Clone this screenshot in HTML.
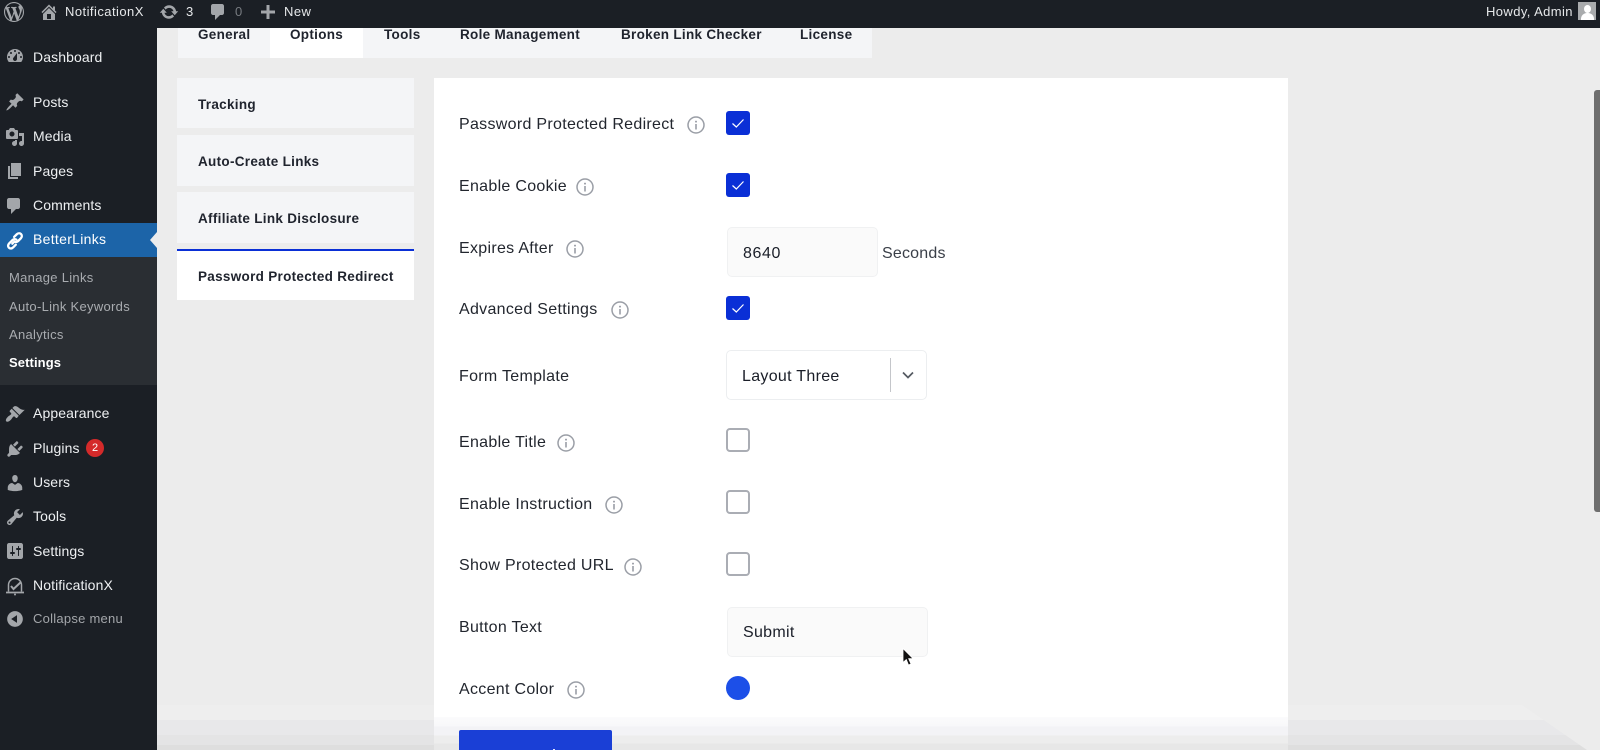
<!DOCTYPE html>
<html><head><meta charset="utf-8"><title>BetterLinks Settings</title>
<style>
html,body{margin:0;padding:0;width:1600px;height:750px;overflow:hidden;background:#ececec;font-family:"Liberation Sans",sans-serif;}
#r{position:relative;width:1600px;height:750px;overflow:hidden;}
.a,.t,svg.i{position:absolute;}
.t{white-space:nowrap;line-height:20px;height:20px;}
.m{left:33px;font-size:14px;color:#eef0f2;letter-spacing:.1px;}
.s{left:9px;font-size:13px;color:#a9acb0;letter-spacing:.3px;}
.b{font-size:13px;color:#e6e8ea;letter-spacing:.45px;}
.tab{font-size:13.5px;font-weight:bold;color:#20242e;letter-spacing:.3px;}
.l{left:459px;font-size:16px;color:#22262e;letter-spacing:.3px;}
.v{font-size:16px;color:#1a1e28;letter-spacing:.3px;}
svg.i{fill:#a3a6aa;}
.p{position:absolute;left:177px;width:237px;background:#f4f5f7;}
.c{position:absolute;left:726px;width:24px;height:24px;box-sizing:border-box;border-radius:3px;background:#0a2fd6;}
.u{background:#fff;border:2px solid #aaadb4;border-radius:4px;}
.inf{position:absolute;width:18px;height:18px;}
</style></head><body><div id="r">

<!-- bottom fade on page background -->
<div class="a" style="left:157px;top:705px;width:1443px;height:45px;background:linear-gradient(#eeeeee 0,#eeeeee 15px,#e8e8ea 15px,#e8e8ea 30px,#e4e4e5 30px,#e4e4e5 40px,#dedede 40px);clip-path:polygon(0 0,1365px 0,1430px 45px,0 45px);"></div>

<!-- sidebar -->
<div class="a" style="left:0;top:0;width:157px;height:750px;background:#1b1f25;"></div>
<div class="a" style="left:0;top:223px;width:157px;height:34px;background:#1c64a8;"></div>
<div class="a" style="left:150px;top:232px;width:0;height:0;border:8px solid transparent;border-right:7px solid #ececec;border-left:0;"></div>
<div class="a" style="left:0;top:257px;width:157px;height:128px;background:#2a2e33;"></div>

<!-- top bar -->
<div class="a" style="left:0;top:0;width:1600px;height:27.5px;background:#1b1f25;"></div>
<svg class="i" style="left:4px;top:2px" width="20" height="20" viewBox="0 0 20 20"><path d="M20 10c0-5.51-4.49-10-10-10C4.48 0 0 4.49 0 10c0 5.52 4.48 10 10 10 5.51 0 10-4.48 10-10zM7.78 15.37L4.37 6.22c.55-.02 1.17-.08 1.17-.08.5-.06.44-1.13-.06-1.11 0 0-1.45.11-2.37.11-.18 0-.37 0-.58-.01C4.12 2.69 6.87 1.11 10 1.11c2.33 0 4.45.87 6.05 2.34-.68-.11-1.65.39-1.65 1.58 0 .74.45 1.36.9 2.1.35.61.55 1.36.55 2.46 0 1.49-1.4 5-1.4 5l-3.03-8.37c.54-.02.82-.17.82-.17.5-.05.44-1.25-.06-1.22 0 0-1.44.12-2.38.12-.87 0-2.33-.12-2.33-.12-.5-.03-.56 1.2-.06 1.22l.92.08 1.26 3.41zM17.41 10c.24-.64.74-1.87.43-4.25.7 1.29 1.05 2.71 1.05 4.25 0 3.29-1.73 6.24-4.4 7.78.97-2.59 1.94-5.2 2.92-7.78zM6.1 18.09C3.12 16.65 1.11 13.53 1.11 10c0-1.3.23-2.48.72-3.59C3.25 10.3 4.67 14.2 6.1 18.09zm4.03-6.63l2.58 6.98c-.86.29-1.76.45-2.71.45-.79 0-1.57-.11-2.29-.33.81-2.38 1.62-4.74 2.42-7.1z" fill-rule="evenodd"/></svg>
<svg class="i" style="left:39px;top:2px" width="20" height="20" viewBox="0 0 20 20"><path d="M16 8.5l1.53 1.53-1.06 1.06L10 4.62l-6.47 6.47-1.06-1.06L10 2.5l4 4v-2h2v4zm-6-2.46l6 5.99V18H4v-5.97zM12 17v-5H8v5h4z"/></svg>
<div class="t b" style="left:65px;top:2px;">NotificationX</div>
<svg class="i" style="left:159px;top:2px" width="20" height="20" viewBox="0 0 20 20"><path d="M10.2 3.28c3.53 0 6.43 2.61 6.92 6h2.08l-3.5 4-3.5-4h2.32c-.45-1.97-2.21-3.45-4.32-3.45-1.45 0-2.73.71-3.54 1.78L4.95 5.66C6.23 4.2 8.11 3.28 10.2 3.28zm-.4 13.44c-3.52 0-6.43-2.61-6.92-6H.8l3.5-4c1.17 1.33 2.33 2.67 3.5 4H5.48c.45 1.97 2.21 3.45 4.32 3.45 1.45 0 2.73-.71 3.54-1.78l1.71 1.95c-1.28 1.46-3.15 2.38-5.25 2.38z"/></svg>
<div class="t b" style="left:186px;top:2px;">3</div>
<svg class="i" style="left:208px;top:2px" width="20" height="20" viewBox="0 0 20 20"><path d="M5 2h9c1.1 0 2 .9 2 2v7c0 1.1-.9 2-2 2h-2l-5 5v-5H5c-1.1 0-2-.9-2-2V4c0-1.1.9-2 2-2z"/></svg>
<div class="t b" style="left:235px;top:2px;color:#777b80;">0</div>
<svg class="i" style="left:258px;top:2px" width="20" height="20" viewBox="0 0 20 20"><path d="M8.5 3h3v5.5H17v3h-5.500V17h-3v-5.500H3v-3h5.500z"/></svg>
<div class="t b" style="left:284px;top:2px;">New</div>
<div class="t b" style="left:1486px;top:2px;letter-spacing:.4px;">Howdy, Admin</div>
<div class="a" style="left:1578px;top:2px;width:18px;height:18px;background:#a9abad;overflow:hidden;">
<div class="a" style="left:5.500px;top:2.500px;width:7px;height:8px;border-radius:50%;background:#fff;"></div>
<div class="a" style="left:2.500px;top:11px;width:13px;height:9px;border-radius:6px 6px 0 0;background:#fff;"></div></div>

<!-- menu -->
<svg class="i" style="left:5px;top:46px" width="20" height="20" viewBox="0 0 20 20"><path fill-rule="evenodd" d="M3.760 16h12.480c1.100-1.370 1.760-3.110 1.760-5 0-4.420-3.580-8-8-8s-8 3.580-8 8c0 1.890.660 3.630 1.760 5zM10 4c.550 0 1 .450 1 1s-.450 1-1 1-1-.450-1-1 .450-1 1-1zM6 6c.550 0 1 .450 1 1s-.450 1-1 1-1-.450-1-1 .450-1 1-1zm8 0c.550 0 1 .450 1 1s-.450 1-1 1-1-.450-1-1 .450-1 1-1zm-5.370 5.550L12 7v6c0 1.100-.900 2-2 2s-2-.900-2-2c0-.570.240-1.080.630-1.450zM4 10c.550 0 1 .450 1 1s-.450 1-1 1-1-.450-1-1 .450-1 1-1zm12 0c.550 0 1 .450 1 1s-.450 1-1 1-1-.450-1-1 .450-1 1-1z"/></svg>
<div class="t m" style="top:47px;">Dashboard</div>
<svg class="i" style="left:5px;top:92px" width="20" height="20" viewBox="0 0 20 20"><path d="M10.440 3.020l1.820-1.820 6.360 6.350-1.830 1.820c-1.050-.680-2.480-.570-3.410.360l-.750.750c-.920.930-1.040 2.350-.350 3.410l-1.830 1.820-2.410-2.410-2.800 2.790c-.420.420-3.380 2.710-3.800 2.290s1.860-3.390 2.280-3.810l2.790-2.790L4.100 9.360l1.830-1.820c1.050.690 2.480.570 3.400-.360l.750-.750c.930-.920 1.050-2.350.360-3.410z"/></svg>
<div class="t m" style="top:92px;">Posts</div>
<svg class="i" style="left:5px;top:127px" width="20" height="20" viewBox="0 0 20 20"><path fill-rule="evenodd" d="M13 11V4c0-.550-.450-1-1-1h-1.670L9 1H5L3.670 3H2c-.550 0-1 .450-1 1v7c0 .550.450 1 1 1h10c.550 0 1-.450 1-1zM7 4.500c1.380 0 2.500 1.120 2.500 2.500S8.380 9.500 7 9.500 4.500 8.380 4.500 7 5.620 4.500 7 4.500zM14 6h5v10.500c0 1.380-1.120 2.500-2.500 2.500S14 17.880 14 16.500s1.120-2.500 2.500-2.500c.170 0 .340.020.500.050V9h-3V6zm-4 8.050V13h2v3.500c0 1.380-1.120 2.500-2.500 2.500S7 17.880 7 16.500 8.120 14 9.500 14c.170 0 .340.020.500.050z"/></svg>
<div class="t m" style="top:126px;">Media</div>
<svg class="i" style="left:5px;top:161px" width="20" height="20" viewBox="0 0 20 20"><path d="M6 15V2h10v13H6zm-1 1h8v2H3V5h2v11z"/></svg>
<div class="t m" style="top:161px;">Pages</div>
<svg class="i" style="left:4px;top:196px" width="20" height="20" viewBox="0 0 20 20"><path d="M5 2h9c1.100 0 2 .900 2 2v7c0 1.100-.900 2-2 2h-2l-5 5v-5H5c-1.100 0-2-.900-2-2V4c0-1.100.900-2 2-2z"/></svg>
<div class="t m" style="top:195px;">Comments</div>
<svg class="a" style="left:6px;top:231px" width="18" height="20" viewBox="0 0 20 22" fill="none" stroke="#fff" stroke-width="2.600" stroke-linecap="round"><path d="M8.500 12.500 L7 14 M9 6.500l3-3c1.500-1.500 3.600-1.400 4.700-.2 1.200 1.200 1.200 3.200-.2 4.700l-3 3c-1.300 1.300-3.200 1.400-4.300.5"/><path d="M11.500 9.500c-1.100-.9-3-.8-4.300.5l-3.700 3.700c-1.500 1.500-1.500 3.500-.3 4.700 1.200 1.200 3.200 1.200 4.700-.3l3-3"/></svg>
<div class="t m" style="top:229px;color:#fff;letter-spacing:.3px;">BetterLinks</div>
<div class="t s" style="top:268px;">Manage Links</div>
<div class="t s" style="top:297px;">Auto-Link Keywords</div>
<div class="t s" style="top:325px;">Analytics</div>
<div class="t s" style="top:353px;color:#fff;font-weight:bold;letter-spacing:.1px;">Settings</div>
<svg class="i" style="left:5px;top:404px" width="20" height="20" viewBox="0 0 20 20"><path d="M14.480 11.060L7.410 3.990l1.500-1.500c.500-.560 2.300-.470 3.510.320 1.210.800 1.430 1.280 2.910 2.100 1.180.640 2.450 1.260 4.450.850zm-.710.710L6.700 4.700 4.930 6.470c-.390.390-.390 1.020 0 1.410l1.060 1.060c.390.390.390 1.030 0 1.420-.600.600-1.430 1.110-2.210 1.690-.350.260-.700.530-1.010.840-1.430 1.430-2.500 3.500-1.500 4.500s3.070-.070 4.500-1.500c.310-.310.580-.660.840-1.010.580-.780 1.090-1.610 1.690-2.210.390-.390 1.020-.390 1.410 0l1.060 1.060c.390.390 1.020.390 1.410 0z"/></svg>
<div class="t m" style="top:403px;">Appearance</div>
<svg class="i" style="left:5px;top:439px" width="20" height="20" viewBox="0 0 20 20"><path d="M13.110 4.360L9.870 7.600 8 5.730l3.240-3.240c.350-.340 1.050-.200 1.560.320.520.510.660 1.210.310 1.550zm-8 1.770l.910-1.120 9.010 9.010-1.190.840c-.710.710-2.630 1.160-3.820 1.160H6.140L4.900 17.260c-.590.590-1.540.590-2.120 0-.590-.58-.590-1.530 0-2.120l1.240-1.240v-3.880c0-1.130.400-3.190 1.090-3.890zm7.260 3.970l3.240-3.240c.340-.350 1.040-.210 1.550.310.520.510.660 1.210.31 1.550l-3.240 3.250z"/></svg>
<div class="t m" style="top:438px;">Plugins</div>
<div class="a" style="left:86px;top:439px;width:18px;height:18px;border-radius:50%;background:#d42a2a;color:#fff;font-size:11px;line-height:18px;text-align:center;">2</div>
<svg class="i" style="left:5px;top:473px" width="20" height="20" viewBox="0 0 20 20"><path d="M10 9.250c-2.270 0-2.730-3.440-2.730-3.440C7 4.020 7.820 2 9.970 2c2.160 0 2.980 2.020 2.710 3.810 0 0-.410 3.440-2.680 3.440zm0 2.570L12.720 10c2.390 0 4.520 2.330 4.520 4.530v2.490s-3.650 1.130-7.240 1.130c-3.650 0-7.240-1.130-7.240-1.130v-2.490c0-2.250 1.940-4.480 4.470-4.480z"/></svg>
<div class="t m" style="top:472px;">Users</div>
<svg class="i" style="left:5px;top:507px" width="20" height="20" viewBox="0 0 20 20"><path fill-rule="evenodd" d="M16.680 9.770c-1.340 1.340-3.300 1.670-4.950.990l-5.410 6.520c-.990.990-2.590.990-3.580 0s-.990-2.590 0-3.570l6.520-5.420c-.680-1.650-.350-3.610.990-4.950 1.280-1.280 3.120-1.620 4.720-1.060l-2.890 2.890 2.820 2.820 2.860-2.870c.530 1.580.180 3.390-1.080 4.650zM3.810 16.210c.400.390 1.040.390 1.430 0 .400-.400.400-1.040 0-1.430-.390-.400-1.030-.400-1.430 0-.390.390-.390 1.030 0 1.430z"/></svg>
<div class="t m" style="top:506px;">Tools</div>
<svg class="i" style="left:5px;top:541px" width="20" height="20" viewBox="0 0 20 20"><path fill-rule="evenodd" d="M18 16V4c0-1.100-.900-2-2-2H4c-1.100 0-2 .900-2 2v12c0 1.100.900 2 2 2h12c1.100 0 2-.900 2-2zM8 11h1c.550 0 1 .450 1 1s-.450 1-1 1H8v1.500c0 .280-.220.500-.500.500s-.500-.220-.500-.500V13H6c-.550 0-1-.450-1-1s.450-1 1-1h1V5.500c0-.280.220-.500.500-.500s.500.220.500.500V11zm5-2h-1c-.550 0-1-.450-1-1s.450-1 1-1h1V5.500c0-.280.220-.500.500-.500s.500.220.500.500V7h1c.550 0 1 .450 1 1s-.450 1-1 1h-1v5.500c0 .280-.220.500-.500.500s-.500-.220-.500-.500V9z"/></svg>
<div class="t m" style="top:541px;">Settings</div>
<svg class="a" style="left:5px;top:576px" width="20" height="20" viewBox="0 0 20 20" fill="none" stroke="#a3a6aa" stroke-width="1.500"><path d="M3.500 15.500V9a6.500 6.500 0 0 1 13 0v6.500"/><path d="M1 16.500h18" stroke-width="1.800"/><path d="M6 10l2.500 3L16 6" stroke-width="2"/><circle cx="10" cy="18.500" r="1" fill="#a3a6aa" stroke="none"/></svg>
<div class="t m" style="top:575px;">NotificationX</div>
<svg class="i" style="left:5px;top:609px" width="20" height="20" viewBox="0 0 20 20"><path d="M10 2.160c4.330 0 7.840 3.510 7.840 7.840s-3.510 7.840-7.840 7.840S2.160 14.330 2.160 10 5.710 2.160 10 2.160zm2 11.720V6.120L6.180 9.970z" fill-rule="evenodd"/></svg>
<div class="t m" style="top:609px;color:#a3a6aa;font-size:13px;letter-spacing:.25px;">Collapse menu</div>

<!-- tabs -->
<div class="a" style="left:178px;top:28px;width:694px;height:30px;background:#f4f5f7;"></div>
<div class="a" style="left:270px;top:28px;width:93px;height:30px;background:#fff;"></div>
<div class="t tab" style="left:198px;top:25px;">General</div>
<div class="t tab" style="left:290px;top:25px;">Options</div>
<div class="t tab" style="left:384px;top:25px;">Tools</div>
<div class="t tab" style="left:460px;top:25px;">Role Management</div>
<div class="t tab" style="left:621px;top:25px;">Broken Link Checker</div>
<div class="t tab" style="left:800px;top:25px;">License</div>

<!-- left panels -->
<div class="p" style="top:78px;height:50px;"></div>
<div class="p" style="top:135px;height:51px;"></div>
<div class="p" style="top:192px;height:51px;"></div>
<div class="p" style="top:249px;height:51px;background:#fff;border-top:2px solid #0a2fd6;box-sizing:border-box;"></div>
<div class="t tab" style="left:198px;top:95px;">Tracking</div>
<div class="t tab" style="left:198px;top:152px;">Auto-Create Links</div>
<div class="t tab" style="left:198px;top:209px;">Affiliate Link Disclosure</div>
<div class="t tab" style="left:198px;top:266.500px;">Password Protected Redirect</div>

<!-- main panel -->
<div class="a" style="left:434px;top:78px;width:854px;height:672px;background:#fff;"></div>
<div class="a" style="left:434px;top:717px;width:854px;height:33px;background:linear-gradient(#fbfbfc 0,#f8f8fa 9px,#f3f3f6 10px,#f3f3f6 18px,#ededed 19px,#ededed 26px,#e7e7e7 27px);"></div>

<div class="t l" style="top:115px;">Password Protected Redirect</div>
<div class="t l" style="top:177px;">Enable Cookie</div>
<div class="t l" style="top:239px;">Expires After</div>
<div class="t l" style="top:300px;">Advanced Settings</div>
<div class="t l" style="top:367px;">Form Template</div>
<div class="t l" style="top:433px;">Enable Title</div>
<div class="t l" style="top:495px;">Enable Instruction</div>
<div class="t l" style="top:556px;">Show Protected URL</div>
<div class="t l" style="top:618px;">Button Text</div>
<div class="t l" style="top:680px;">Accent Color</div>

<svg class="inf" style="left:687px;top:116px" viewBox="0 0 18 18"><circle cx="9" cy="9" r="8" fill="none" stroke="#9a9ea6" stroke-width="1.500"/><rect x="8.200" y="8" width="1.600" height="5.500" fill="#9a9ea6"/><circle cx="9" cy="5.600" r="1" fill="#9a9ea6"/></svg>
<svg class="inf" style="left:576px;top:178px" viewBox="0 0 18 18"><circle cx="9" cy="9" r="8" fill="none" stroke="#9a9ea6" stroke-width="1.500"/><rect x="8.200" y="8" width="1.600" height="5.500" fill="#9a9ea6"/><circle cx="9" cy="5.600" r="1" fill="#9a9ea6"/></svg>
<svg class="inf" style="left:566px;top:240px" viewBox="0 0 18 18"><circle cx="9" cy="9" r="8" fill="none" stroke="#9a9ea6" stroke-width="1.500"/><rect x="8.200" y="8" width="1.600" height="5.500" fill="#9a9ea6"/><circle cx="9" cy="5.600" r="1" fill="#9a9ea6"/></svg>
<svg class="inf" style="left:611px;top:301px" viewBox="0 0 18 18"><circle cx="9" cy="9" r="8" fill="none" stroke="#9a9ea6" stroke-width="1.500"/><rect x="8.200" y="8" width="1.600" height="5.500" fill="#9a9ea6"/><circle cx="9" cy="5.600" r="1" fill="#9a9ea6"/></svg>
<svg class="inf" style="left:557px;top:434px" viewBox="0 0 18 18"><circle cx="9" cy="9" r="8" fill="none" stroke="#9a9ea6" stroke-width="1.500"/><rect x="8.200" y="8" width="1.600" height="5.500" fill="#9a9ea6"/><circle cx="9" cy="5.600" r="1" fill="#9a9ea6"/></svg>
<svg class="inf" style="left:605px;top:496px" viewBox="0 0 18 18"><circle cx="9" cy="9" r="8" fill="none" stroke="#9a9ea6" stroke-width="1.500"/><rect x="8.200" y="8" width="1.600" height="5.500" fill="#9a9ea6"/><circle cx="9" cy="5.600" r="1" fill="#9a9ea6"/></svg>
<svg class="inf" style="left:624px;top:557.500px" viewBox="0 0 18 18"><circle cx="9" cy="9" r="8" fill="none" stroke="#9a9ea6" stroke-width="1.500"/><rect x="8.200" y="8" width="1.600" height="5.500" fill="#9a9ea6"/><circle cx="9" cy="5.600" r="1" fill="#9a9ea6"/></svg>
<svg class="inf" style="left:567px;top:681px" viewBox="0 0 18 18"><circle cx="9" cy="9" r="8" fill="none" stroke="#9a9ea6" stroke-width="1.500"/><rect x="8.200" y="8" width="1.600" height="5.500" fill="#9a9ea6"/><circle cx="9" cy="5.600" r="1" fill="#9a9ea6"/></svg>

<div class="c" style="top:111px;"><svg width="24" height="24" viewBox="0 0 24 24" fill="none" stroke="#fff" stroke-width="1.200"><path d="M6.500 12.500l3.800 3.500 7.200-7.500"/></svg></div>
<div class="c" style="top:172.500px;"><svg width="24" height="24" viewBox="0 0 24 24" fill="none" stroke="#fff" stroke-width="1.200"><path d="M6.500 12.500l3.800 3.500 7.200-7.500"/></svg></div>
<div class="c" style="top:296px;"><svg width="24" height="24" viewBox="0 0 24 24" fill="none" stroke="#fff" stroke-width="1.200"><path d="M6.500 12.500l3.800 3.500 7.200-7.500"/></svg></div>
<div class="c u" style="top:428px;"></div>
<div class="c u" style="top:490px;"></div>
<div class="c u" style="top:552px;"></div>

<div class="a" style="left:727px;top:227px;width:151px;height:50px;box-sizing:border-box;background:#fafafa;border:1px solid #f0f1f2;border-radius:5px;"></div>
<div class="t v" style="left:743px;top:244px;letter-spacing:.6px;">8640</div>
<div class="t v" style="left:882px;top:244px;color:#3a3f48;letter-spacing:.2px;">Seconds</div>

<div class="a" style="left:726px;top:350px;width:201px;height:50px;box-sizing:border-box;background:#fff;border:1px solid #eceef0;border-radius:5px;"></div>
<div class="t v" style="left:742px;top:367px;">Layout Three</div>
<div class="a" style="left:889.500px;top:358px;width:1px;height:34px;background:#c4c6ca;"></div>
<svg class="a" style="left:902px;top:371px" width="12" height="8" viewBox="0 0 12 8" fill="none" stroke="#555a62" stroke-width="1.700"><path d="M1 1.500l5 5 5-5"/></svg>

<div class="a" style="left:727px;top:606.500px;width:201px;height:50.500px;box-sizing:border-box;background:#fafafa;border:1px solid #f0f1f2;border-radius:5px;"></div>
<div class="t v" style="left:743px;top:623px;">Submit</div>

<div class="a" style="left:726px;top:676px;width:24px;height:24px;border-radius:50%;background:#1c4fe8;"></div>

<div class="a" style="left:459px;top:729.500px;width:153px;height:21px;border-radius:2px 2px 0 0;background:#1a3fd6;overflow:hidden;"></div>
<div class="a" style="left:553px;top:748.500px;width:2px;height:2px;background:#dfe5ff;"></div>

<!-- cursor -->
<svg class="a" style="left:902px;top:648px" width="13" height="19" viewBox="0 0 13 19"><path d="M1 0.500v14l3.300-3 2.200 5.500 2.500-1-2.300-5.300h4.500z" fill="#111" stroke="#fff" stroke-width=".8"/></svg>

<!-- scrollbar -->
<div class="a" style="left:1594px;top:90px;width:6px;height:422px;border-radius:3px 0 0 3px;background:#6e6e6e;"></div>

</div></body></html>
